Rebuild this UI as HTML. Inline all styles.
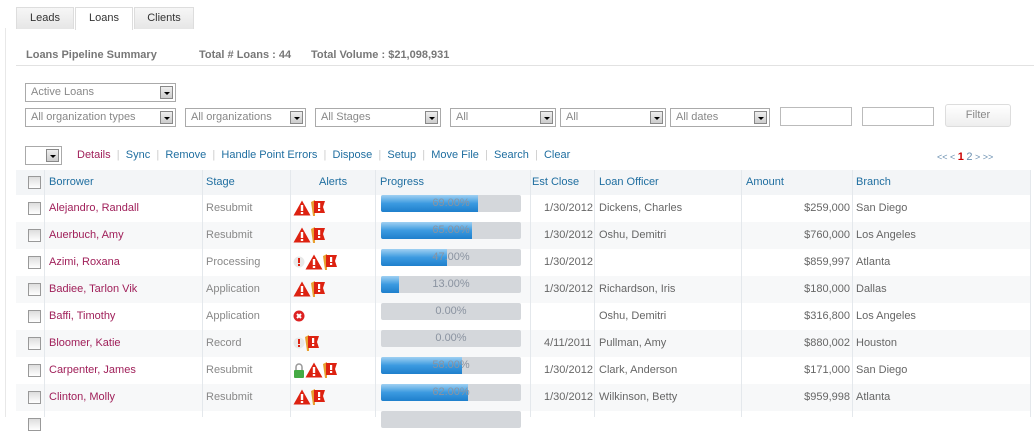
<!DOCTYPE html><html><head><style>
body{margin:0;width:1034px;height:417px;background:#fff;font-family:"Liberation Sans",sans-serif;font-size:11px;color:#666;position:relative;overflow:hidden}
.a{position:absolute;white-space:nowrap}
.tab{position:absolute;top:7px;height:21px;line-height:21px;text-align:center;font-size:11px;color:#333;background:linear-gradient(#f6f6f6,#e6e6e6);border:1px solid #ddd;border-bottom:none}
.sel{position:absolute;height:17px;border:1px solid #aaa;background:#fff;color:#888;font-size:11px;line-height:17px;padding-left:5px;box-sizing:content-box}
.sel i{position:absolute;right:2px;top:2px;width:13px;height:13px;background:linear-gradient(#eee,#ccc);border:1px solid #888;box-sizing:border-box}
.sel i:after{content:"";position:absolute;left:3px;top:5px;border:3px solid transparent;border-top:3px solid #000}
.lnk{color:#1f6ea0}
.sep{color:#ccc}
.row{position:absolute;left:16px;width:1014px;height:27px;font-size:11px}
.row div{position:absolute;top:0;line-height:27px}
.cb{position:absolute;width:11px;height:11px;border:1px solid #999;background:linear-gradient(#ddd,#fff);top:7px;left:12px}
.vl{position:absolute;top:170px;width:1px;height:247px;background:#e4e8ec}
.bar{position:absolute;left:365px;top:5px;width:140px;height:17px;background:#d4d7db;border-radius:2px}
.bar b{position:absolute;left:0;top:0;height:17px;background:linear-gradient(#9fd0f2,#3b9ae0 50%,#1e7fcc);border-radius:2px 0 0 2px}
.bar span{position:absolute;left:0;width:140px;text-align:center;line-height:17px;color:#8a93a0;font-size:11px}
</style></head><body>
<div class="a" style="left:5px;top:28px;width:1px;height:389px;background:#e8e8e8"></div>
<div class="tab" style="left:16px;width:56px">Leads</div>
<div class="tab" style="left:75px;width:56px;background:#fff;height:22px">Loans</div>
<div class="tab" style="left:134px;width:58px">Clients</div>
<div class="a" style="left:26px;top:49px;font-weight:bold;color:#777">Loans Pipeline Summary</div>
<div class="a" style="left:199px;top:49px;font-weight:bold;color:#777">Total # Loans : 44</div>
<div class="a" style="left:311px;top:49px;font-weight:bold;color:#777">Total Volume : $21,098,931</div>
<div class="a" style="left:16px;top:65px;width:1018px;height:1px;background:#e2e2e2"></div>
<div class="sel" style="left:25px;top:83px;width:144px">Active Loans<i></i></div>
<div class="sel" style="left:25px;top:108px;width:144px">All organization types<i></i></div>
<div class="sel" style="left:185px;top:108px;width:114px">All organizations<i></i></div>
<div class="sel" style="left:315px;top:108px;width:119px">All Stages<i></i></div>
<div class="sel" style="left:450px;top:108px;width:99px">All<i></i></div>
<div class="sel" style="left:560px;top:108px;width:99px">All<i></i></div>
<div class="sel" style="left:670px;top:108px;width:93px">All dates<i></i></div>
<div class="a" style="left:780px;top:107px;width:70px;height:17px;border:1px solid #bbb"></div>
<div class="a" style="left:862px;top:107px;width:70px;height:17px;border:1px solid #bbb"></div>
<div class="a" style="left:945px;top:104px;width:64px;height:21px;border:1px solid #ddd;border-radius:3px;background:linear-gradient(#fff,#eee);text-align:center;line-height:21px;color:#888">Filter</div>
<div class="sel" style="left:25px;top:146px;width:35px;height:17px;padding:0"><i style="top:2px"></i></div>
<div class="a" style="left:77px;top:149px"><span style="color:#a0205a">Details</span> &nbsp;<span class="sep">|</span>&nbsp; <span class="lnk">Sync</span> &nbsp;<span class="sep">|</span>&nbsp; <span class="lnk">Remove</span> &nbsp;<span class="sep">|</span>&nbsp; <span class="lnk">Handle Point Errors</span> &nbsp;<span class="sep">|</span>&nbsp; <span class="lnk">Dispose</span> &nbsp;<span class="sep">|</span>&nbsp; <span class="lnk">Setup</span> &nbsp;<span class="sep">|</span>&nbsp; <span class="lnk">Move File</span> &nbsp;<span class="sep">|</span>&nbsp; <span class="lnk">Search</span> &nbsp;<span class="sep">|</span>&nbsp; <span class="lnk">Clear</span></div>
<div class="a" style="left:937px;top:151px;font-size:9px;color:#6a8fb0">&lt;&lt; &lt; <b style="color:#c00;font-size:11px">1</b> <span style="font-size:11px">2</span> &gt; &gt;&gt;</div>
<div class="a" style="left:16px;top:170px;width:1014px;height:25px;background:#f3f5f7;border-bottom:1px solid #e0e4e8"></div>
<div class="row" style="top:170px;height:25px;color:#1f6ea0"><span class="cb" style="top:6px"></span><div style="left:33px;line-height:25px">Borrower</div><div style="left:190px;line-height:25px">Stage</div><div style="left:303px;line-height:25px">Alerts</div><div style="left:364px;line-height:25px">Progress</div><div style="left:516px;line-height:25px">Est Close</div><div style="left:583px;line-height:25px">Loan Officer</div><div style="left:730px;line-height:25px">Amount</div><div style="left:840px;line-height:25px">Branch</div></div>
<div id="rows"></div>
<div class="vl" style="left:44px"></div><div class="vl" style="left:202px"></div><div class="vl" style="left:290px"></div><div class="vl" style="left:375px"></div><div class="vl" style="left:530px"></div><div class="vl" style="left:594px"></div><div class="vl" style="left:741px"></div><div class="vl" style="left:852px"></div><div class="vl" style="left:1030px"></div>
<script>
var T='<svg width="18" height="16" viewBox="0 0 18 16" style="vertical-align:middle"><path d="M9 0.5L17.5 15.5H0.5Z" fill="#d21"/><rect x="7.8" y="5" width="2.4" height="6" fill="#fff"/><rect x="7.8" y="12" width="2.4" height="2" fill="#fff"/></svg>';
var F='<svg width="15" height="16" viewBox="0 0 15 16" style="vertical-align:middle"><path d="M0 2L4 0V16H2Z" fill="#e9a030"/><path d="M3 1H14L12 7L14 13H3Z" fill="#d21"/><rect x="7" y="3" width="2.2" height="5" fill="#fff"/><rect x="7" y="9" width="2.2" height="2" fill="#fff"/></svg>';
var E='<svg width="12" height="14" viewBox="0 0 12 14" style="vertical-align:middle"><circle cx="6" cy="7" r="5.5" fill="#e8e8e8"/><rect x="5" y="3" width="2" height="5" fill="#d21"/><rect x="5" y="9" width="2" height="2" fill="#d21"/></svg>';
var X='<svg width="12" height="12" viewBox="0 0 12 12" style="vertical-align:middle"><circle cx="6" cy="6" r="5.5" fill="#d22"/><path d="M4 4L8 8M8 4L4 8" stroke="#fff" stroke-width="2"/></svg>';
var L='<svg width="12" height="15" viewBox="0 0 12 15" style="vertical-align:middle"><path d="M3 7V4a3 3 0 0 1 6 0V7" stroke="#999" stroke-width="1.5" fill="none"/><rect x="1" y="7" width="10" height="8" rx="1" fill="#4a4"/></svg>';
var d=[["Alejandro, Randall","Resubmit",T+F,69,"1/30/2012","Dickens, Charles","$259,000","San Diego"],
["Auerbuch, Amy","Resubmit",T+F,65,"1/30/2012","Oshu, Demitri","$760,000","Los Angeles"],
["Azimi, Roxana","Processing",E+T+F,47,"1/30/2012","","$859,997","Atlanta"],
["Badiee, Tarlon Vik","Application",T+F,13,"1/30/2012","Richardson, Iris","$180,000","Dallas"],
["Baffi, Timothy","Application",X,0,"","Oshu, Demitri","$316,800","Los Angeles"],
["Bloomer, Katie","Record",E+F,0,"4/11/2011","Pullman, Amy","$880,002","Houston"],
["Carpenter, James","Resubmit",L+T+F,58,"1/30/2012","Clark, Anderson","$171,000","San Diego"],
["Clinton, Molly","Resubmit",T+F,62,"1/30/2012","Wilkinson, Betty","$959,998","Atlanta"],
["","","",0,"","","",""]];
var h='';d.forEach(function(r,i){h+='<div class="row" style="top:'+(195+27*i)+'px;background:'+(i%2?'#f7f8f9':'#fff')+'"><span class="cb"></span><div style="left:33px;color:#a0205a">'+r[0]+'</div><div style="left:190px;color:#888">'+r[1]+'</div><div style="left:277px">'+r[2]+'</div><div class="bar"><b style="width:'+(r[3]*1.4)+'px"></b><span>'+(i<8?r[3].toFixed(2)+'%':'')+'</span></div><div style="left:528px">'+r[4]+'</div><div style="left:583px">'+r[5]+'</div><div style="left:730px;width:104px;text-align:right">'+r[6]+'</div><div style="left:840px">'+r[7]+'</div></div>';});
document.getElementById('rows').innerHTML=h;
</script>
</body></html>
